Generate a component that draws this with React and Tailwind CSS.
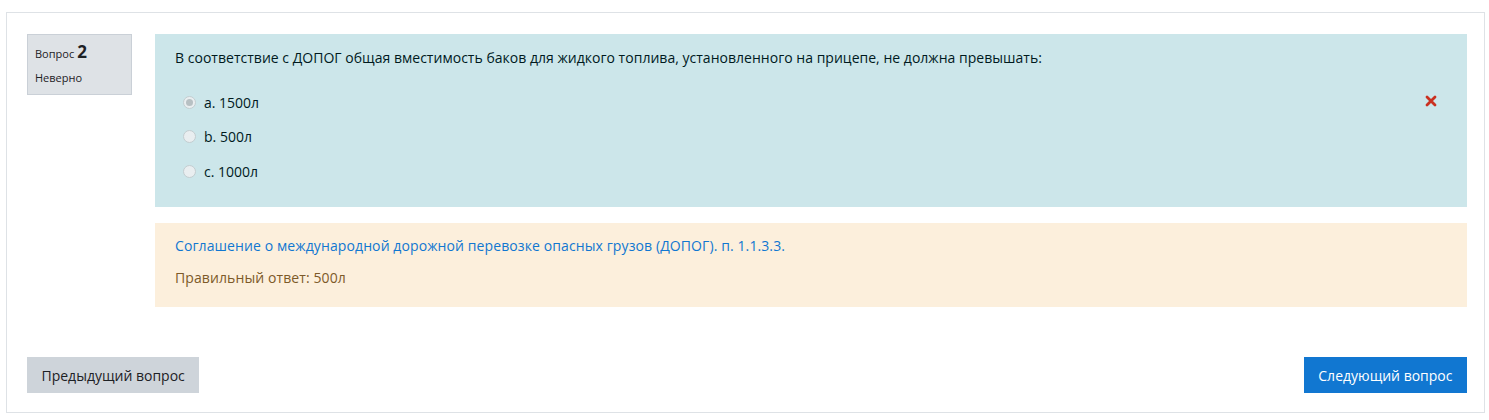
export default function App() {
  const opts = [
    { l: "a. 1500л", checked: true },
    { l: "b. 500л" },
    { l: "c. 1000л" },
  ];
  return (
    <div className="w-[1489px] h-[420px] bg-white pl-[6px] pt-[12px] pr-[4px]" style={{ fontFamily: '"Open Sans", "Noto Sans", sans-serif' }}>
      <div className="border border-[#dee2e6] h-[401px] pl-[20px] pr-[17px] pt-[21px] flex flex-col">
        <div className="flex gap-[23px]">
          <div className="w-[105px] h-[61px] shrink-0 bg-[#dee2e6] border border-[#cad0d7] pl-[7px] pt-[6px] text-[#1d2125]">
            <div className="flex items-baseline gap-[3px] leading-[22px]">
              <span className="text-[11px]">Вопрос</span>
              <span className="text-[17px] font-bold">2</span>
            </div>
            <div className="text-[11px] leading-[18px] mt-[4px]">Неверно</div>
          </div>
          <div className="flex-1 flex flex-col gap-[16px]">
            <div className="bg-[#cce6ea] h-[173px] pl-[20px] pr-[30px] pt-[13px] relative text-[#001a1e]">
              <div className="text-[14px] leading-[22px] tracking-[0.02px]">В соответствие с ДОПОГ общая вместимость баков для жидкого топлива, установленного на прицепе, не должна превышать:</div>
              <div className="mt-[22px] flex flex-col gap-[12.5px] pl-[8px]">
                {opts.map((o, i) => (
                  <div key={i} className="flex items-center h-[22px] text-[14px]">
                    <span className="w-[13px] h-[13px] rounded-full border border-[#c3cdd0] bg-[#e9eef0] flex items-center justify-center mr-[8px]">
                      {o.checked && <span className="w-[7px] h-[7px] rounded-full bg-[#b7c0c3]" />}
                    </span>
                    <span>{o.l}</span>
                  </div>
                ))}
              </div>
              <svg className="absolute left-[1270px] top-[61px]" width="12" height="12" viewBox="0 0 12 12">
                <path d="M2 2 L10 10 M10 2 L2 10" stroke="#ca3120" strokeWidth="2.8" strokeLinecap="round" />
              </svg>
            </div>
            <div className="bg-[#fcefdc] h-[84px] pl-[20px] pt-[12px] text-[14px] leading-[22px] tracking-[0.1px]">
              <div className="text-[#1177d1]">Соглашение о международной дорожной перевозке опасных грузов (ДОПОГ). п. 1.1.3.3.</div>
              <div className="text-[#7d5a29] mt-[10px]">Правильный ответ: 500л</div>
            </div>
          </div>
        </div>
        <div className="flex justify-between mt-[50px]">
          <button className="h-[36px] px-[14.5px] bg-[#ced4da] text-[#1d2125] text-[14px]">Предыдущий вопрос</button>
          <button className="h-[36px] px-[14.5px] bg-[#1177d1] text-white text-[14px]">Следующий вопрос</button>
        </div>
      </div>
    </div>
  );
}
